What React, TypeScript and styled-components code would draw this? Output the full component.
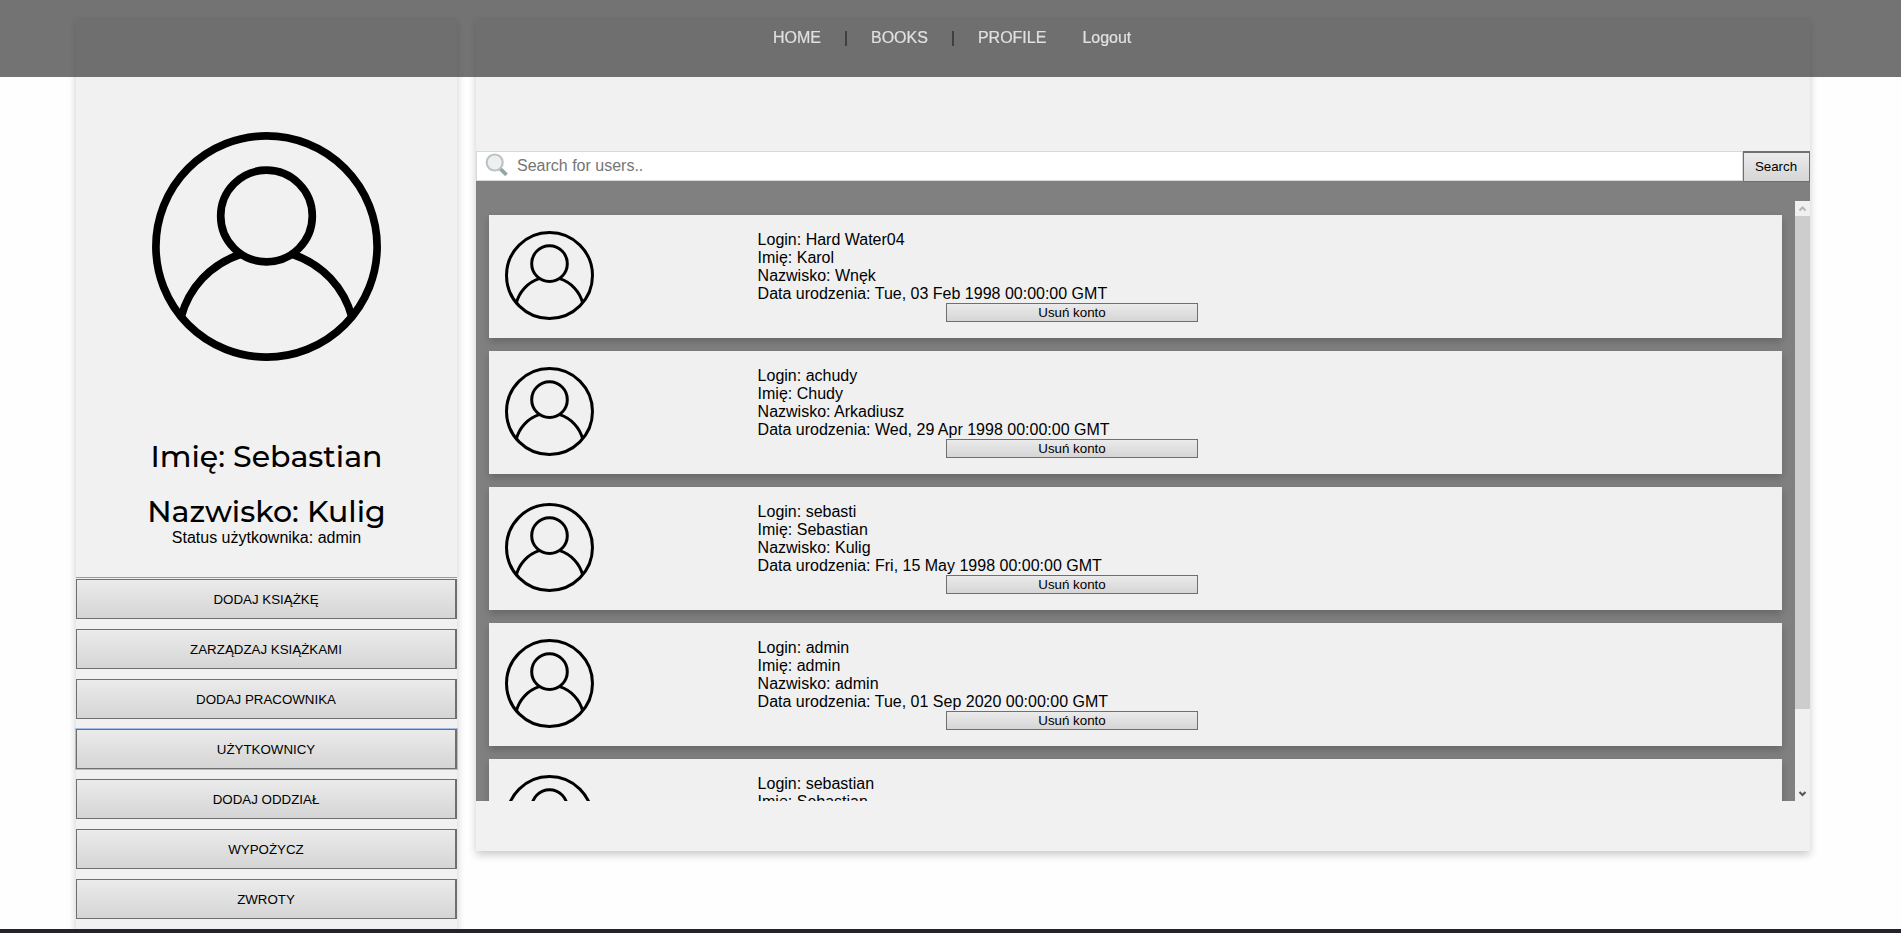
import React from "react";
import styled, { createGlobalStyle } from "styled-components";

const GlobalStyle = createGlobalStyle`
  *, *::before, *::after { box-sizing: border-box; }
  html, body { margin: 0; padding: 0; background: #fefefe; }
  body {
    font-family: Arial, "Liberation Sans", sans-serif;
    font-size: 16px;
    line-height: 18px;
    color: #000;
  }
`;

const Page = styled.div`
  height: 933px;
  overflow: hidden;
  display: flex;
  flex-direction: column;
`;

const TopBar = styled.header`
  position: fixed;
  inset: 0 0 auto 0;
  z-index: 10;
  height: 77px;
  padding: 29px 0 0 773px;
  background: rgba(56, 56, 56, 0.7);
`;

const Menu = styled.nav`
  display: flex;
  align-items: flex-start;
  white-space: pre;
`;

const MenuLink = styled.a<{ $gap: number }>`
  margin-right: ${(p) => p.$gap}px;
  color: #e0e0e0;
  -webkit-text-stroke: 0.2px #e0e0e0;
`;

const Separator = styled.span`
  width: 2px;
  height: 15px;
  margin: 2px 24px 0 0;
  background: #404040;
`;

const Columns = styled.main`
  height: 929px;
  flex: none;
  padding: 18px 91px 0 76px;
  display: flex;
  align-items: flex-start;
  gap: 19px;
  overflow: hidden;
`;

const panelShadow = "0 4px 8px 0 rgba(0, 0, 0, 0.2)";

const Sidebar = styled.aside`
  width: 381px;
  height: 940px;
  flex: none;
  padding-top: 114px;
  display: flex;
  flex-direction: column;
  align-items: center;
  background: #f1f1f1;
  box-shadow: ${panelShadow};
`;

const FullName = styled.h2`
  margin: 0;
  height: 55px;
  line-height: 55px;
  font-family: Montserrat, Inter, sans-serif;
  font-size: 30px;
  font-weight: 500;
  white-space: nowrap;
`;

const Names = styled.div`
  margin-top: 68px;
  height: 100px;
  display: flex;
  flex-direction: column;
  align-items: center;
`;

const Status = styled.p`
  margin: 0;
`;

const Actions = styled.div`
  width: 100%;
  margin-top: 30px;
  padding-top: 1px;
  border-top: 1px solid #999;
  display: flex;
  flex-direction: column;
  gap: 10px;
`;

const buttonFace = "linear-gradient(#ebebeb, #d5d5d5)";

const ActionButton = styled.button<{ $focused?: boolean }>`
  height: 40px;
  padding: 0;
  border: solid #6f6f6f;
  border-width: 1px 2px 1px 1px;
  border-radius: 0;
  background: ${buttonFace};
  font: 13.333px Arial, "Liberation Sans", sans-serif;
  color: #000;
  outline: ${(p) => (p.$focused ? "1px solid #a5bfe2" : "none")};
`;

const Content = styled.section`
  flex: 1;
  height: 833px;
  padding-top: 133px;
  background: #f1f1f1;
  box-shadow: ${panelShadow};
`;

const Results = styled.div`
  height: 650px;
  display: flex;
  flex-direction: column;
  background: #808080;
`;

const SearchRow = styled.form`
  height: 50px;
  flex: none;
  display: flex;
  align-items: flex-start;
`;

const SearchField = styled.label`
  flex: 1;
  height: 30px;
  padding-left: 8px;
  display: flex;
  align-items: center;
  border: 1px solid #d8d8d8;
  background: #fff;
`;

const SearchInput = styled.input`
  flex: 1;
  height: 26px;
  margin-left: 9px;
  padding: 0;
  border: 0;
  outline: 0;
  background: none;
  font: 16px Arial, "Liberation Sans", sans-serif;
  &::placeholder { color: #757575; opacity: 1; }
`;

const SearchButton = styled.button`
  width: 67px;
  height: 31px;
  padding: 0 1px 2px 0;
  border: solid #6f6f6f;
  border-width: 2px 1px 1px 1px;
  border-radius: 0;
  background: ${buttonFace};
  font: 13.333px Arial, "Liberation Sans", sans-serif;
  color: #000;
`;

const Scroller = styled.div`
  height: 600px;
  display: flex;
  overflow: hidden;
`;

const CardList = styled.div`
  flex: 1;
  height: 600px;
  padding: 14px 13px 0;
  display: flex;
  flex-direction: column;
  gap: 13px;
  overflow: hidden;
`;

const Card = styled.article`
  height: 123px;
  flex: none;
  padding: 16px;
  display: flex;
  background: #f0f0f0;
  box-shadow: ${panelShadow};
`;

const Portrait = styled.div`
  width: 252.6px;
  flex: none;
`;

const Details = styled.div`
  width: 628.8px;
  display: flex;
  flex-direction: column;
`;

const DeleteButton = styled.button`
  width: 252px;
  height: 19px;
  padding: 0;
  align-self: center;
  border: 1px solid #6f6f6f;
  border-radius: 0;
  background: ${buttonFace};
  font: 13.333px/15px Arial, "Liberation Sans", sans-serif;
  color: #000;
`;

const Scrollbar = styled.div`
  width: 15px;
  display: flex;
  flex-direction: column;
  background: #f0f0f0;
`;

const ScrollArrow = styled.svg`
  display: block;
  width: 15px;
  height: 15px;
  flex: none;
`;

const ScrollThumb = styled.div`
  height: 493px;
  margin-bottom: auto;
  background: #cdcdcd;
`;

const Footer = styled.footer`
  height: 4px;
  flex: none;
  background: #24232a;
`;

const Block = styled.svg`
  display: block;
  flex: none;
`;

const Lens = styled(Block)`
  margin-bottom: 3px;
`;

function Avatar({ size }: { size: number }) {
  return (
    <Block width={size} height={size} viewBox="0 0 229 229" fill="none" stroke="#000" strokeWidth="7.7">
      <circle cx="114.5" cy="114.5" r="110.6" />
      <circle cx="114.5" cy="84" r="45.8" />
      <path d="M29 185.5A90 90 0 0 1 88 122.5M200 185.5A90 90 0 0 0 141 122.5" />
    </Block>
  );
}

function Magnifier() {
  return (
    <Lens width="23" height="23" viewBox="0 0 23 23">
      <path d="M14.8 15.3L21.5 21.8" stroke="#95a5a5" strokeWidth="3.8" />
      <circle cx="9.7" cy="9.5" r="8" fill="#ecf0f1" stroke="#bdc3c7" strokeWidth="2.2" />
    </Lens>
  );
}

const actions = [
  "DODAJ KSIĄŻKĘ",
  "ZARZĄDZAJ KSIĄŻKAMI",
  "DODAJ PRACOWNIKA",
  "UŻYTKOWNICY",
  "DODAJ ODDZIAŁ",
  "WYPOŻYCZ",
  "ZWROTY",
];

const users = [
  { login: "Hard Water04", first: "Karol", last: "Wnęk", born: "Tue, 03 Feb 1998 00:00:00 GMT" },
  { login: "achudy", first: "Chudy", last: "Arkadiusz", born: "Wed, 29 Apr 1998 00:00:00 GMT" },
  { login: "sebasti", first: "Sebastian", last: "Kulig", born: "Fri, 15 May 1998 00:00:00 GMT" },
  { login: "admin", first: "admin", last: "admin", born: "Tue, 01 Sep 2020 00:00:00 GMT" },
  { login: "sebastian", first: "Sebastian", last: "", born: "" },
];

export default function App() {
  return (
    <Page>
      <GlobalStyle />
      <TopBar>
        <Menu>
          <MenuLink $gap={24}>HOME</MenuLink>
          <Separator />
          <MenuLink $gap={24}>BOOKS</MenuLink>
          <Separator />
          <MenuLink $gap={36}>PROFILE</MenuLink>
          <MenuLink $gap={0}>Logout</MenuLink>
        </Menu>
      </TopBar>
      <Columns>
        <Sidebar>
          <Avatar size={229} />
          <Names>
            <FullName>Imię: Sebastian</FullName>
            <FullName>Nazwisko: Kulig</FullName>
          </Names>
          <Status>Status użytkownika: admin</Status>
          <Actions>
            {actions.map((label) => (
              <ActionButton key={label} $focused={label === "UŻYTKOWNICY"}>
                {label}
              </ActionButton>
            ))}
          </Actions>
        </Sidebar>
        <Content>
          <Results>
            <SearchRow>
              <SearchField>
                <Magnifier />
                <SearchInput placeholder="Search for users.." />
              </SearchField>
              <SearchButton type="button">Search</SearchButton>
            </SearchRow>
            <Scroller>
              <CardList>
                {users.map((user) => (
                  <Card key={user.login}>
                    <Portrait>
                      <Avatar size={89} />
                    </Portrait>
                    <Details>
                      <span>Login: {user.login}</span>
                      <span>Imię: {user.first}</span>
                      {user.last && <span>Nazwisko: {user.last}</span>}
                      {user.born && <span>Data urodzenia: {user.born}</span>}
                      {user.born && <DeleteButton>Usuń konto</DeleteButton>}
                    </Details>
                  </Card>
                ))}
              </CardList>
              <Scrollbar>
                <ScrollArrow viewBox="0 0 15 15">
                  <path d="M4.5 9.5L7.5 6.5L10.5 9.5" fill="none" stroke="#b5b5b5" strokeWidth="2" />
                </ScrollArrow>
                <ScrollThumb />
                <ScrollArrow viewBox="0 0 15 15">
                  <path d="M4.5 6L7.5 9L10.5 6" fill="none" stroke="#555" strokeWidth="2" />
                </ScrollArrow>
              </Scrollbar>
            </Scroller>
          </Results>
        </Content>
      </Columns>
      <Footer />
    </Page>
  );
}
